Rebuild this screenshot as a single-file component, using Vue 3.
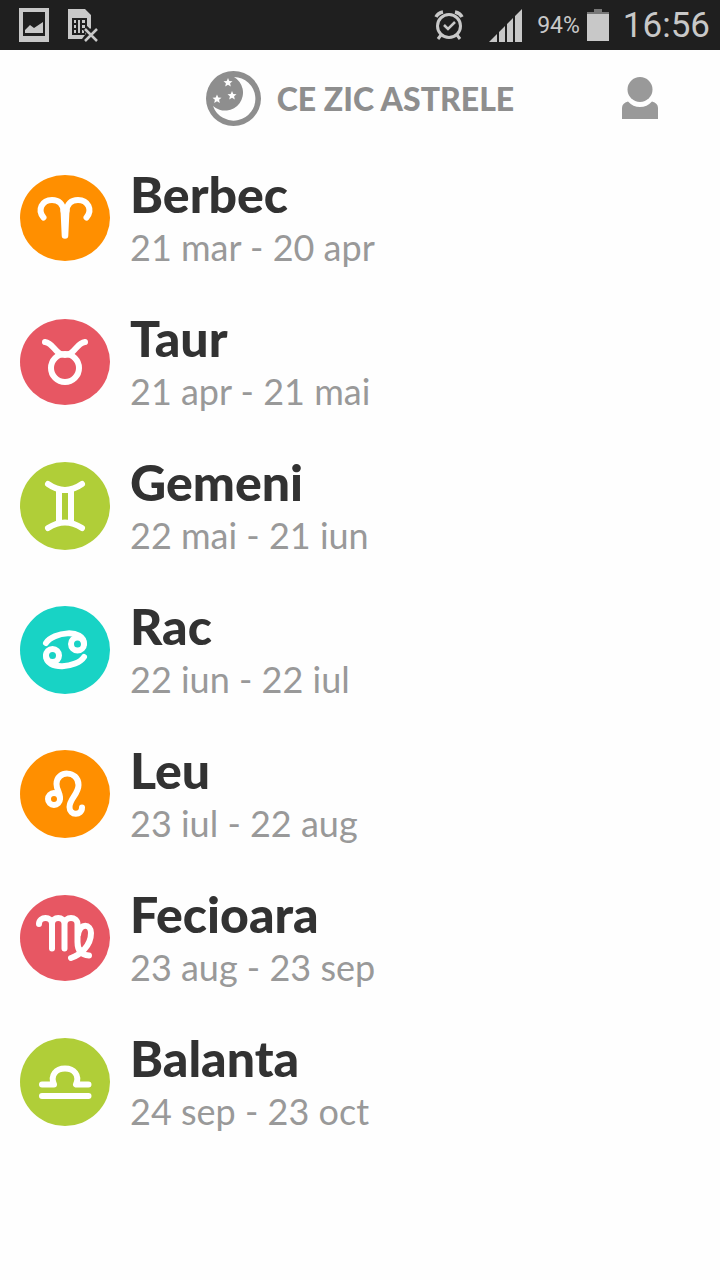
<script setup>
    import { ref } from 'vue';

    const battery = ref("94%");
    const time = ref("16:56");

    // ry: vertical radius of the badge, the horizontal one is always 45
    const signs = ref([
        { id: "aries", name: "Berbec", dates: "21 mar - 20 apr", color: "orange", ry: 43 },
        { id: "taurus", name: "Taur", dates: "21 apr - 21 mai", color: "red", ry: 43 },
        { id: "gemini", name: "Gemeni", dates: "22 mai - 21 iun", color: "green", ry: 44 },
        { id: "cancer", name: "Rac", dates: "22 iun - 22 iul", color: "teal", ry: 44 },
        { id: "leo", name: "Leu", dates: "23 iul - 22 aug", color: "orange", ry: 44 },
        { id: "virgo", name: "Fecioara", dates: "23 aug - 23 sep", color: "red", ry: 43 },
        { id: "libra", name: "Balanta", dates: "24 sep - 23 oct", color: "green", ry: 44 }
    ]);
</script>

<template>
    <div class="statusBar">
        <div class="notifications">
            <svg width="30" height="34" viewBox="0 0 30 34">
                <path fill="#c8c8c8" fill-rule="evenodd" d="M0 0H30V34H0ZM4 4V28H26V4Z" />
                <path fill="#c8c8c8" d="M6 25V22L11 17L15 20L24 14V25Z" />
            </svg>
            <svg width="30" height="34" viewBox="0 0 30 34">
                <path fill="#c8c8c8" d="M0 1H17L23 7V20L17 27L14 31H0Z" />
                <path fill="#1f1f1f" d="M4 10H19V20L17 27H4Z" />
                <path fill="#c8c8c8" d="M6 12H8V15H6ZM6 17H8V20H6ZM6 22H8V25H6ZM10 12H12V25H10ZM14 12H17V15H14ZM14 17H17V20H14ZM14 22H16V25H14Z" />
                <path stroke="#1f1f1f" stroke-width="6" d="M17 20L30 33M30 20L17 33" />
                <path stroke="#c8c8c8" stroke-width="2.5" d="M17 21L29 33M29 21L17 33" />
            </svg>
        </div>
        <div class="system">
            <svg class="alarm" width="30" height="30" viewBox="0 0 30 30" fill="none" stroke="#c8c8c8">
                <circle cx="15" cy="16" r="11.5" stroke-width="3" />
                <path d="M10 15L14 19L21 12" stroke-width="2.5" />
                <path d="M2 7Q4 3 9 2M28 7Q26 3 21 2" stroke-width="3.5" />
                <path d="M7 25L4 29M23 25L26 29" stroke-width="3" />
            </svg>
            <svg class="signal" width="34" height="34" viewBox="0 0 34 34" fill="#c8c8c8">
                <path d="M0 34L8 26V34ZM10 34V24L16 18V34ZM18 34V16L24 10V34ZM26 34V8L33 1V34Z" />
            </svg>
            <span class="battery">{{ battery }}</span>
            <svg width="22" height="32" viewBox="0 0 22 32">
                <path fill="#777777" d="M7 0H15V3H22V5H0V3H7Z" />
                <path fill="#c8c8c8" d="M0 5H22V32H0Z" />
            </svg>
            <span class="time">{{ time }}</span>
        </div>
    </div>

    <header>
        <h1>
            <svg width="55" height="55" viewBox="0 0 55 55">
                <circle cx="27.5" cy="27.5" r="27.5" fill="#8e8e8e" />
                <path fill="#fefefe" d="M28 6A21.800 21.800 0 1 1 7 35A18 18 0 1 0 28 6Z" />
                <g fill="#fefefe">
                    <path d="M0 -4.5L1.3 -1.6L4.5 -1.3L2.1 .8L2.8 4L0 2.3L-2.8 4L-2.1 .8L-4.5 -1.3L-1.3 -1.6Z" transform="translate(22 11.500)" />
                    <path d="M0 -4.5L1.3 -1.6L4.5 -1.3L2.1 .8L2.8 4L0 2.3L-2.8 4L-2.1 .8L-4.5 -1.3L-1.3 -1.6Z" transform="translate(26 24.500)" />
                    <path d="M0 -4.5L1.3 -1.6L4.5 -1.3L2.1 .8L2.8 4L0 2.3L-2.8 4L-2.1 .8L-4.5 -1.3L-1.3 -1.6Z" transform="translate(11 28)" />
                </g>
            </svg>
            <span>CE ZIC ASTRELE</span>
        </h1>
        <button class="profile" aria-label="Profil">
            <svg width="36" height="42" viewBox="0 0 36 42" fill="#999999">
                <circle cx="18" cy="12.5" r="12.5" />
                <path d="M0 42V31Q0 26 6 24.500Q11 30 18 30Q25 30 30 24.500Q36 26 36 31V42Z" />
            </svg>
        </button>
    </header>

    <main>
        <ul>
            <li v-for="sign in signs" :key="sign.id">
                <a :href="'#' + sign.id">
                    <svg class="badge" :class="sign.color" width="90" height="90" viewBox="0 0 90 90">
                        <ellipse cx="45" cy="45" rx="45" :ry="sign.ry" />
                        <g class="glyph">
                            <template v-if="sign.id == 'aries'">
                                <path d="M23.500 44.500C17 37 22 27 32 27C39 27 43 31 43.500 38M66.500 44.500C73 37 68 27 58 27C51 27 47 31 46.500 38" />
                                <path class="solid" d="M40.500 37L45 32.500L49.500 37L48.300 62.500A3.300 3.300 0 0 1 41.700 62.500Z" />
                            </template>
                            <template v-else-if="sign.id == 'taurus'">
                                <circle cx="45" cy="51" r="14" />
                                <path d="M25 25C34 26 35 38 45 38C55 38 56 26 65 25" />
                            </template>
                            <template v-else-if="sign.id == 'gemini'">
                                <path d="M28 23Q45 35 62 23M28 67Q45 56 62 67M39 29V61M51 29V61" />
                            </template>
                            <template v-else-if="sign.id == 'cancer'">
                                <circle cx="57.500" cy="39" r="6.500" />
                                <circle cx="32.500" cy="50.500" r="6.500" />
                                <path d="M26 38C33 27 64 23 64 39M64 52C57 63 26 66 26 50.500" />
                            </template>
                            <template v-else-if="sign.id == 'leo'">
                                <circle cx="34" cy="50" r="6" />
                                <path d="M40 49C40 43 36.500 41 36.500 35C36.500 21 58.500 21 58.500 36C58.500 45 49.500 50 49.500 58C49.500 67 62 67 62 58.500" />
                            </template>
                            <template v-else-if="sign.id == 'virgo'">
                                <path d="M19 31C19 23 32 23 32 31V55.500M32 31C32 23 44.500 23 44.500 31V55.500M44.500 31C44.500 23 57.500 23 57.500 31V49C57.500 58 62 62 69 62.500M58 42C60 29 71 31 71 40C71 53 60 62 51 65" />
                            </template>
                            <template v-else>
                                <path d="M22 47.500H34C30 38 36 31.500 45 31.500C54 31.500 60 38 56 47.500H68.500M22 59H68.500" />
                            </template>
                        </g>
                    </svg>
                    <span class="text">
                        <strong>{{ sign.name }}</strong>
                        <span class="dates">{{ sign.dates }}</span>
                    </span>
                </a>
            </li>
        </ul>
    </main>
</template>

<style>
    body {
        margin: 0;
        background-color: #fefefe;
    }
</style>

<style scoped>
    svg {
        display: block;
        flex-shrink: 0;
    }

    .statusBar {
        height: 50px;
        padding: 0 10px 0 19px;
        display: flex;
        justify-content: space-between;
        align-items: center;
        background-color: #1f1f1f;
        color: #c8c8c8;
        font-family: Roboto, sans-serif;
    }

    .notifications {
        display: flex;
        gap: 19px;
    }

    .system {
        display: flex;
        align-items: center;
        gap: 7px;
    }

    .alarm {
        margin-right: 18px;
    }

    .signal {
        margin-right: 7px;
    }

    .battery {
        font-size: 23px;
    }

    .time {
        margin-left: 7px;
        font-size: 35px;
    }

    header {
        height: 96px;
        padding: 0 62px;
        display: grid;
        grid-template-columns: 1fr auto 1fr;
        align-items: center;
        font-family: Lato, sans-serif;
    }

    h1 {
        grid-column: 2;
        margin: 0;
        display: flex;
        align-items: center;
        gap: 16px;
        font-size: 32px;
        font-weight: 900;
        color: #8e8e8e;
    }

    .profile {
        justify-self: end;
        padding: 0;
        border: none;
        background: none;
        cursor: pointer;
    }

    main {
        font-family: Lato, sans-serif;
    }

    ul {
        margin: 0;
        padding: 0;
        list-style: none;
    }

    a {
        padding: 19px 20px;
        display: flex;
        align-items: center;
        gap: 20px;
        text-decoration: none;
    }

    .text {
        display: flex;
        flex-direction: column;
    }

    strong {
        font-size: 50px;
        line-height: 58px;
        font-weight: 900;
        color: #323232;
    }

    .dates {
        font-size: 36px;
        line-height: 48px;
        color: #999999;
    }

    .orange {
        fill: #ff8f00;
    }

    .red {
        fill: #e75763;
    }

    .green {
        fill: #b0ce38;
    }

    .teal {
        fill: #18d3c5;
    }

    .glyph {
        fill: none;
        stroke: white;
        stroke-width: 6px;
        stroke-linecap: round;
        stroke-linejoin: round;
    }

    .solid {
        fill: white;
        stroke: none;
    }
</style>
